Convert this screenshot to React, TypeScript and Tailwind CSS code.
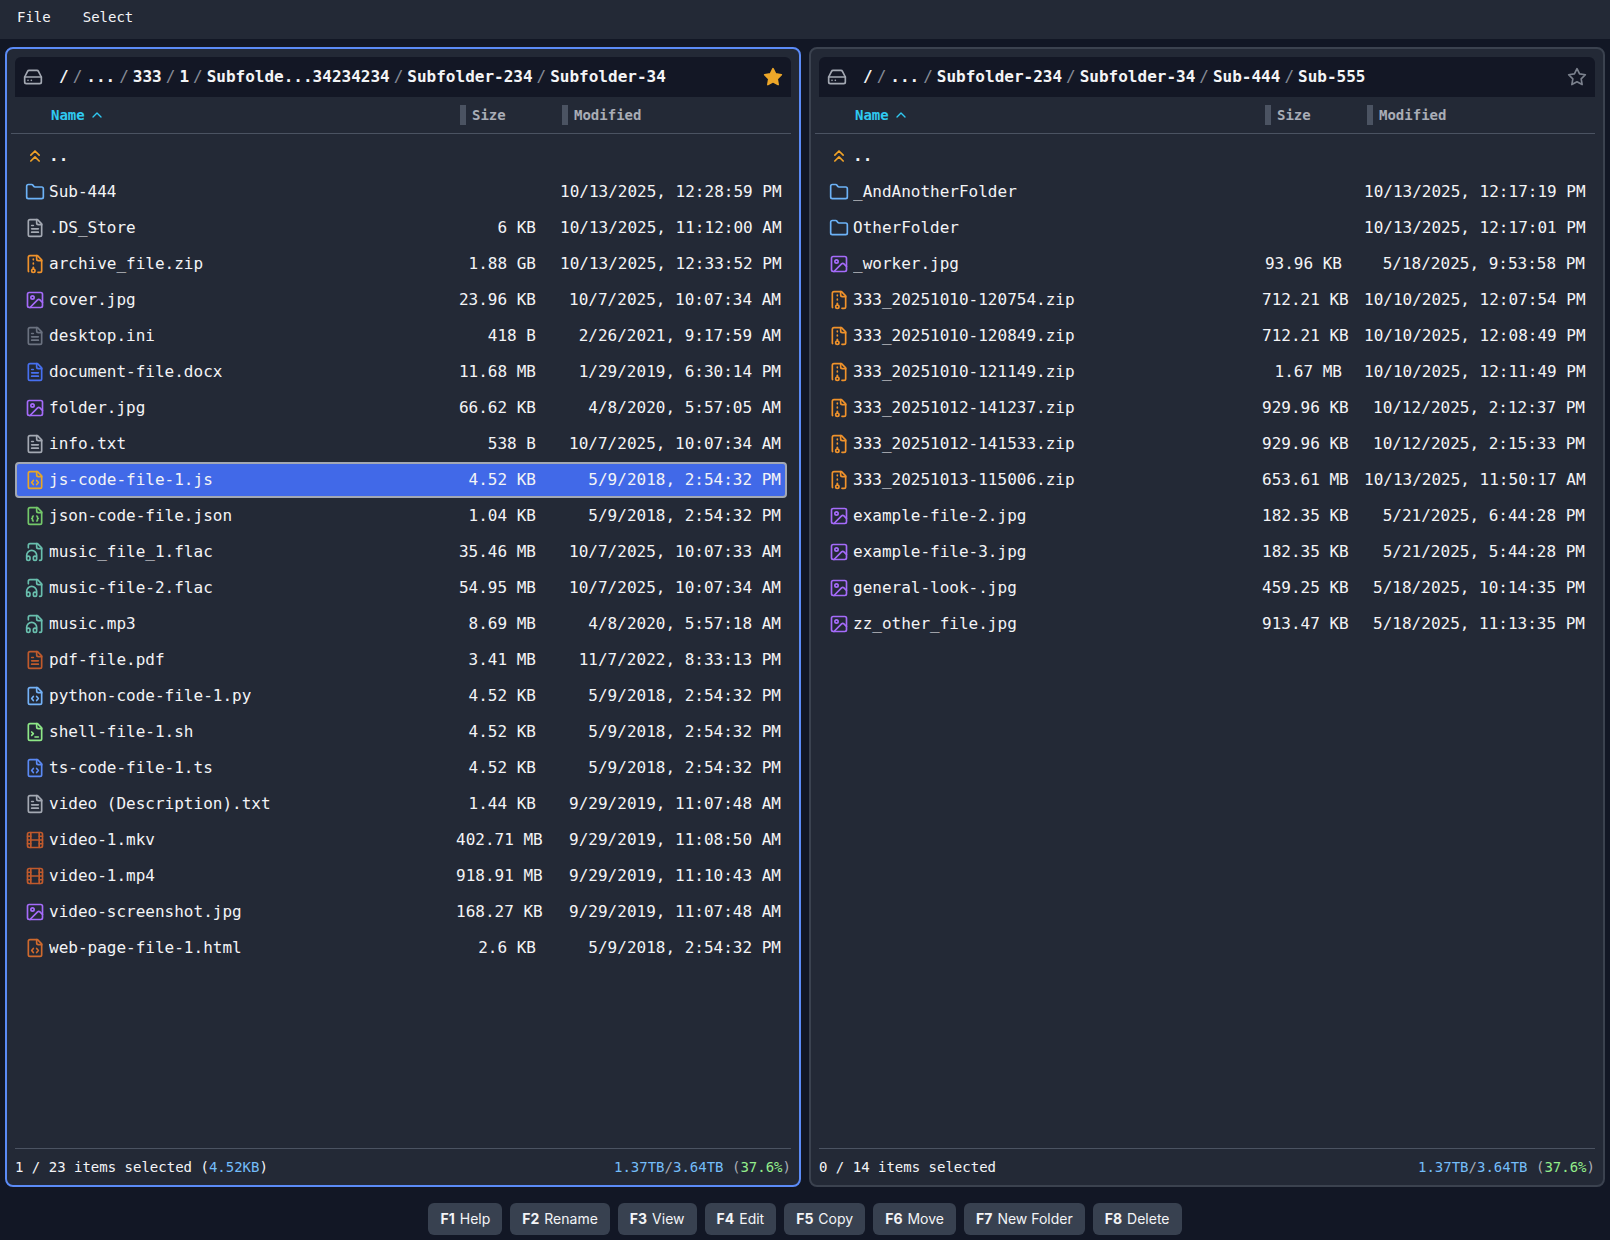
import type { ReactNode } from "react";
import { ChevronsUp, ChevronUp, Film, Folder, HardDrive, Image } from "lucide-react";

interface IconProps {
  className?: string;
  children?: ReactNode;
}

function Icon({ className = "", children }: IconProps) {
  return (
    <svg
      aria-hidden="true"
      viewBox="0 0 24 24"
      fill="none"
      stroke="currentColor"
      strokeWidth={2}
      strokeLinecap="round"
      strokeLinejoin="round"
      className={`size-5 shrink-0 ${className}`}
    >
      {children}
    </svg>
  );
}

function Sheet({ className, children }: IconProps) {
  return (
    <Icon className={className}>
      <path d="M15 2H6a2 2 0 0 0-2 2v16a2 2 0 0 0 2 2h12a2 2 0 0 0 2-2V7Z" />
      <path d="M14 2v4a2 2 0 0 0 2 2h4" />
      {children}
    </Icon>
  );
}

const TextFile = ({ className }: IconProps) => (
  <Sheet className={className}>
    <path d="M10 9H8" />
    <path d="M16 13H8" />
    <path d="M16 17H8" />
  </Sheet>
);

const CodeFile = ({ className }: IconProps) => (
  <Sheet className={className}>
    <path d="M10 12.5 8 15l2 2.5" />
    <path d="m14 12.5 2 2.5-2 2.5" />
  </Sheet>
);

const JsonFile = ({ className }: IconProps) => (
  <Sheet className={className}>
    <path d="M10 12a1 1 0 0 0-1 1v1a1 1 0 0 1-1 1 1 1 0 0 1 1 1v1a1 1 0 0 0 1 1" />
    <path d="M14 18a1 1 0 0 0 1-1v-1a1 1 0 0 1 1-1 1 1 0 0 1-1-1v-1a1 1 0 0 0-1-1" />
  </Sheet>
);

const ShellFile = ({ className }: IconProps) => (
  <Sheet className={className}>
    <path d="m8 16 2-2-2-2" />
    <path d="M12 18h4" />
  </Sheet>
);

const ZipFile = ({ className }: IconProps) => (
  <Icon className={className}>
    <path d="M10 12v-1" />
    <path d="M10 18v-2" />
    <path d="M10 7V6" />
    <path d="M14 2v4a2 2 0 0 0 2 2h4" />
    <path d="M15.5 22H18a2 2 0 0 0 2-2V7l-5-5H6a2 2 0 0 0-2 2v16a2 2 0 0 0 .274 1.01" />
    <circle cx="10" cy="20" r="2" />
  </Icon>
);

const AudioFile = ({ className }: IconProps) => (
  <Icon className={className}>
    <path d="M17.5 22h.5a2 2 0 0 0 2-2V7l-5-5H6a2 2 0 0 0-2 2v3" />
    <path d="M14 2v4a2 2 0 0 0 2 2h4" />
    <path d="M2 19a2 2 0 1 1 4 0v1a2 2 0 1 1-4 0v-4a6 6 0 0 1 12 0v4a2 2 0 1 1-4 0v-1a2 2 0 1 1 4 0" />
  </Icon>
);

const StarIcon = ({ className }: IconProps) => (
  <Icon className={className}>
    <polygon points="12 2 15.09 8.26 22 9.27 17 14.14 18.18 21.02 12 17.77 5.82 21.02 7 14.14 2 9.27 8.91 8.26 12 2" />
  </Icon>
);

const KINDS = {
  up: <ChevronsUp className="size-5 shrink-0 text-[#f0a227]" />,
  folder: <Folder className="size-5 shrink-0 text-[#6cb2f7]" />,
  text: <TextFile className="text-[#a4a9b3]" />,
  config: <TextFile className="text-[#6b7280]" />,
  zip: <ZipFile className="text-[#f0922b]" />,
  image: <Image className="size-5 shrink-0 text-[#a56bfa]" />,
  doc: <TextFile className="text-[#4770f0]" />,
  js: <CodeFile className="text-[#e8a628]" />,
  json: <JsonFile className="text-[#74c96a]" />,
  audio: <AudioFile className="text-[#69bfae]" />,
  pdf: <TextFile className="text-[#c05a2c]" />,
  python: <CodeFile className="text-[#74b2f8]" />,
  shell: <ShellFile className="text-[#8ee887]" />,
  ts: <CodeFile className="text-[#5b8af5]" />,
  video: <Film className="size-5 shrink-0 text-[#c05a2c]" />,
  html: <CodeFile className="text-[#cf6a2e]" />,
};

type Entry = [kind: keyof typeof KINDS, name: string, size: string, modified: string];

const LEFT: Entry[] = [
  ["up", "..", "", ""],
  ["folder", "Sub-444", "", "10/13/2025, 12:28:59 PM"],
  ["text", ".DS_Store", "6 KB", "10/13/2025, 11:12:00 AM"],
  ["zip", "archive_file.zip", "1.88 GB", "10/13/2025, 12:33:52 PM"],
  ["image", "cover.jpg", "23.96 KB", "10/7/2025, 10:07:34 AM"],
  ["config", "desktop.ini", "418 B", "2/26/2021, 9:17:59 AM"],
  ["doc", "document-file.docx", "11.68 MB", "1/29/2019, 6:30:14 PM"],
  ["image", "folder.jpg", "66.62 KB", "4/8/2020, 5:57:05 AM"],
  ["text", "info.txt", "538 B", "10/7/2025, 10:07:34 AM"],
  ["js", "js-code-file-1.js", "4.52 KB", "5/9/2018, 2:54:32 PM"],
  ["json", "json-code-file.json", "1.04 KB", "5/9/2018, 2:54:32 PM"],
  ["audio", "music_file_1.flac", "35.46 MB", "10/7/2025, 10:07:33 AM"],
  ["audio", "music-file-2.flac", "54.95 MB", "10/7/2025, 10:07:34 AM"],
  ["audio", "music.mp3", "8.69 MB", "4/8/2020, 5:57:18 AM"],
  ["pdf", "pdf-file.pdf", "3.41 MB", "11/7/2022, 8:33:13 PM"],
  ["python", "python-code-file-1.py", "4.52 KB", "5/9/2018, 2:54:32 PM"],
  ["shell", "shell-file-1.sh", "4.52 KB", "5/9/2018, 2:54:32 PM"],
  ["ts", "ts-code-file-1.ts", "4.52 KB", "5/9/2018, 2:54:32 PM"],
  ["text", "video (Description).txt", "1.44 KB", "9/29/2019, 11:07:48 AM"],
  ["video", "video-1.mkv", "402.71 MB", "9/29/2019, 11:08:50 AM"],
  ["video", "video-1.mp4", "918.91 MB", "9/29/2019, 11:10:43 AM"],
  ["image", "video-screenshot.jpg", "168.27 KB", "9/29/2019, 11:07:48 AM"],
  ["html", "web-page-file-1.html", "2.6 KB", "5/9/2018, 2:54:32 PM"],
];

const RIGHT: Entry[] = [
  ["up", "..", "", ""],
  ["folder", "_AndAnotherFolder", "", "10/13/2025, 12:17:19 PM"],
  ["folder", "OtherFolder", "", "10/13/2025, 12:17:01 PM"],
  ["image", "_worker.jpg", "93.96 KB", "5/18/2025, 9:53:58 PM"],
  ["zip", "333_20251010-120754.zip", "712.21 KB", "10/10/2025, 12:07:54 PM"],
  ["zip", "333_20251010-120849.zip", "712.21 KB", "10/10/2025, 12:08:49 PM"],
  ["zip", "333_20251010-121149.zip", "1.67 MB", "10/10/2025, 12:11:49 PM"],
  ["zip", "333_20251012-141237.zip", "929.96 KB", "10/12/2025, 2:12:37 PM"],
  ["zip", "333_20251012-141533.zip", "929.96 KB", "10/12/2025, 2:15:33 PM"],
  ["zip", "333_20251013-115006.zip", "653.61 MB", "10/13/2025, 11:50:17 AM"],
  ["image", "example-file-2.jpg", "182.35 KB", "5/21/2025, 6:44:28 PM"],
  ["image", "example-file-3.jpg", "182.35 KB", "5/21/2025, 5:44:28 PM"],
  ["image", "general-look-.jpg", "459.25 KB", "5/18/2025, 10:14:35 PM"],
  ["image", "zz_other_file.jpg", "913.47 KB", "5/18/2025, 11:13:35 PM"],
];

function FileRow({ entry, selected, gap }: { entry: Entry; selected: boolean; gap: string }) {
  const [kind, name, size, modified] = entry;
  return (
    <tr
      aria-selected={selected}
      className={`flex h-9 items-center rounded border-2 pr-1 pl-2 ${
        selected ? "border-[#a3a8b3] bg-[#4169e8]" : "border-transparent"
      }`}
    >
      <td className="flex min-w-0 flex-1 items-center gap-1">
        {KINDS[kind]}
        <span className={`truncate ${kind === "up" ? "font-bold" : ""}`}>{name}</span>
      </td>
      <td className="w-20 shrink-0 text-right whitespace-nowrap">{size}</td>
      <td className={`w-[221px] shrink-0 text-right whitespace-nowrap ${gap}`}>{modified}</td>
    </tr>
  );
}

function SortHeader({ label, width }: { label: string; width: string }) {
  return (
    <th scope="col" className={`flex shrink-0 items-center gap-1.5 ${width}`}>
      <span className="h-5 w-1.5 bg-[#4b5362]" />
      <button type="button" className="font-bold">{label}</button>
    </th>
  );
}

interface PanelProps {
  label: string;
  active?: boolean;
  path: string[];
  entries: Entry[];
  selected?: string;
  summary: string;
  selectedSize?: string;
  columnGap: string;
  modifiedWidth: string;
}

function Panel(props: PanelProps) {
  const { label, active = false, path, entries, selected, summary, selectedSize } = props;
  return (
    <section
      aria-label={label}
      className={`flex min-w-0 flex-1 flex-col rounded-lg border-2 bg-[#232936] pt-2 pr-2 pl-1 ${
        active ? "border-[#5b8bf7]" : "border-[#3b424f]"
      }`}
    >
      <div className="ml-1 flex h-10 items-center rounded-t-md bg-[#131725] px-2">
        <HardDrive className="mr-4 size-5 shrink-0 text-[#a4a9b3]" />
        <nav aria-label="Path" className="flex min-w-0 flex-1 font-bold whitespace-nowrap">
          {path.map((part, i) => (
            <span key={i} className="flex">
              {i > 0 && <span className="mx-1 font-normal text-[#868b96]">/</span>}
              <a href="#">{part}</a>
            </span>
          ))}
        </nav>
        <button type="button" aria-label="Favorite" aria-pressed={active}>
          <StarIcon className={active ? "fill-[#eda729] text-[#eda729]" : "text-[#7b818d]"} />
        </button>
      </div>
      <table className="block flex-1">
        <thead className="block">
          <tr className="flex h-[37px] items-center border-b border-[#4b5362] text-sm text-[#a9adb6]">
            <th scope="col" aria-sort="ascending" className="flex flex-1 pl-10 text-[#2fc9f2]">
              <button type="button" className="flex items-center gap-1 font-bold">
                Name
                <ChevronUp size={16} />
              </button>
            </th>
            <SortHeader label="Size" width="w-[102px]" />
            <SortHeader label="Modified" width={props.modifiedWidth} />
          </tr>
        </thead>
        <tbody className="block pt-1 pr-1 pl-1">
          {entries.map((entry) => (
            <FileRow
              key={entry[1]}
              entry={entry}
              selected={entry[1] === selected}
              gap={props.columnGap}
            />
          ))}
        </tbody>
      </table>
      <div className="ml-1 flex h-[37px] items-center justify-between border-t border-[#4b5362] text-sm">
        <span>
          {summary}
          {selectedSize && (
            <>
              {" "}(<span className="text-[#74bdf9]">{selectedSize}</span>)
            </>
          )}
        </span>
        <span className="text-[#a9adb6]">
          <span className="text-[#74bdf9]">1.37TB</span>/<span className="text-[#74bdf9]">3.64TB</span> (
          <span className="text-[#93ee8b]">37.6%</span>)
        </span>
      </div>
    </section>
  );
}

const ACTIONS = ["Help", "Rename", "View", "Edit", "Copy", "Move", "New Folder", "Delete"];

export default function App() {
  return (
    <div className="flex min-h-screen flex-col bg-[#121725] font-['DejaVu_Sans_Mono',monospace] text-base leading-6 text-[#f3f4f6]">
      <header className="flex h-[39px] items-start gap-4 bg-[#232936] px-[9px] pt-[3px] text-sm">
        <button type="button" className="px-2 py-1">File</button>
        <button type="button" className="px-2 py-1">Select</button>
      </header>
      <main className="flex flex-1 gap-2 px-[5px] pt-2">
        <Panel
          label="Left panel"
          active
          path={["/", "...", "333", "1", "Subfolde...34234234", "Subfolder-234", "Subfolder-34"]}
          entries={LEFT}
          selected="js-code-file-1.js"
          summary="1 / 23 items selected"
          selectedSize="4.52KB"
          columnGap="ml-6"
          modifiedWidth="w-[229px]"
        />
        <Panel
          label="Right panel"
          path={["/", "...", "Subfolder-234", "Subfolder-34", "Sub-444", "Sub-555"]}
          entries={RIGHT}
          summary="0 / 14 items selected"
          columnGap="ml-[22px]"
          modifiedWidth="w-[228px]"
        />
      </main>
      <footer className="flex justify-center gap-2 pt-4 pb-[5px] font-['Inter',sans-serif] text-sm">
        {ACTIONS.map((action, i) => (
          <button
            key={action}
            type="button"
            className="flex gap-[5px] rounded-md bg-[#384150] px-3 py-1.5"
          >
            <span className="font-bold">F{i + 1}</span>
            <span>{action}</span>
          </button>
        ))}
      </footer>
    </div>
  );
}
